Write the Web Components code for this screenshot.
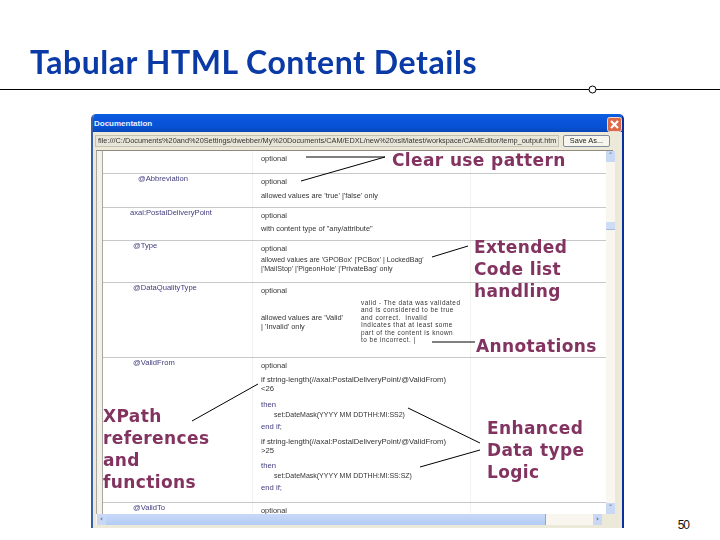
<!DOCTYPE html>
<html>
<head>
<meta charset="utf-8">
<title>Tabular HTML Content Details</title>
<style>
    html, body { margin: 0; padding: 0; background: #fff; }
</style>
</head>
<body>
<slide-page heading="Tabular HTML Content Details" number="50">
    <doc-window>
        <doc-row style="--h:23px">
            <span>optional</span>
        </doc-row>
        <doc-row style="--h:34px" name="@Abbreviation" indent="35">
            <span>optional</span>
            <span style="margin-top:5px">allowed values are 'true' |'false' only</span>
        </doc-row>
        <doc-row style="--h:33px" name="axal:PostalDeliveryPoint" indent="27">
            <span>optional</span>
            <span style="margin-top:4px">with content type of "any/attribute"</span>
        </doc-row>
        <doc-row style="--h:42px;--fs:7.1px" name="@Type" indent="30">
            <span style="font-size:7.4px">optional</span>
            <span style="margin-top:3px">allowed values are 'GPOBox' |'PCBox' | LockedBag'<br>|'MailStop' |'PigeonHole' |'PrivateBag' only</span>
        </doc-row>
        <doc-row style="--h:75px" name="@DataQualityType" indent="30">
            <span>optional</span>
            <span style="display:flex;align-items:flex-start;height:50px">
                <span style="width:100px;flex:none;margin-top:18px">allowed values are 'Valid'<br>| 'Invalid' only</span>
                <span style="line-height:7.4px;font-size:6.4px;letter-spacing:.5px;margin-top:4px;white-space:nowrap">valid - The data was validated<br>and is considered to be true<br>and correct.&nbsp; Invalid<br>Indicates that at least some<br>part of the content is known<br>to be incorrect. |</span>
            </span>
        </doc-row>
        <doc-row style="--h:145px;--fs:7.7px" name="@ValidFrom" indent="30">
            <span style="font-size:7.4px">optional</span>
            <span style="margin-top:5px">if string-length(//axal:PostalDeliveryPoint/@ValidFrom)<br>&lt;26</span>
            <span class="kw" style="margin-top:7px">then</span>
            <span class="in" style="margin-top:1px">set:DateMask(YYYY MM DDTHH:MI:SS2)</span>
            <span class="kw" style="margin-top:3px">end if;</span>
            <span style="margin-top:6px">if string-length(//axal:PostalDeliveryPoint/@ValidFrom)<br>&gt;25</span>
            <span class="kw" style="margin-top:6px">then</span>
            <span class="in" style="margin-top:1px">set:DateMask(YYYY MM DDTHH:MI:SS:SZ)</span>
            <span class="kw" style="margin-top:3px">end if;</span>
        </doc-row>
        <doc-row style="--h:12px" name="@ValidTo" indent="30">
            <span>optional</span>
        </doc-row>
    </doc-window>

    <call-out x="392" y="149">Clear use pattern</call-out>
    <call-out x="474" y="236">Extended<br>Code list<br>handling</call-out>
    <call-out x="476" y="335">Annotations</call-out>
    <call-out x="103" y="405">XPath<br>references<br>and<br>functions</call-out>
    <call-out x="487" y="417">Enhanced<br>Data type<br>Logic</call-out>
</slide-page>

<script>
class SlidePage extends HTMLElement {
    constructor() {
        super();
        const shadowRoot = this.attachShadow({ mode: 'open' });
        shadowRoot.innerHTML = `
            <style>
                :host {
                    display: block;
                    position: relative;
                    width: 720px;
                    height: 540px;
                    overflow: hidden;
                    background: #fff;
                }
                header {
                    height: 90px;
                    box-sizing: border-box;
                    padding: 40px 0 0 30px;
                    border-bottom: 1px solid #000;
                }
                h1 {
                    margin: 0;
                    font: bold 32px/44px Lato, "Liberation Sans", sans-serif;
                    letter-spacing: .55px;
                    color: #0a3aa6;
                    white-space: nowrap;
                    filter: blur(.2px);
                }
                main {
                    padding: 24px 0 0 91px;
                }
                svg {
                    position: absolute;
                    left: 0;
                    top: 0;
                    pointer-events: none;
                }
                .num {
                    position: absolute;
                    right: 31px;
                    bottom: 8px;
                    font: 12px "Liberation Sans", sans-serif;
                    letter-spacing: -1px;
                    color: #111;
                }
            </style>
            <header><h1></h1></header>
            <main><slot></slot></main>
            <svg width="720" height="540" viewBox="0 0 720 540" fill="none" stroke="#000" stroke-width="1">
                <circle cx="592.5" cy="89.5" r="3.5" fill="#fff"/>
                <path d="M306 157H385"/>
                <path d="M301 181L385 157"/>
                <path d="M432 257L468 246"/>
                <path d="M432 342H475"/>
                <path d="M192 421L258 384"/>
                <path d="M408 408L480 443"/>
                <path d="M420 467L480 450"/>
            </svg>
            <div class="num"></div>
        `;
        shadowRoot.querySelector('h1').textContent = this.getAttribute('heading');
        shadowRoot.querySelector('.num').textContent = this.getAttribute('number');
    }
}

class DocWindow extends HTMLElement {
    constructor() {
        super();
        const shadowRoot = this.attachShadow({ mode: 'open' });
        shadowRoot.innerHTML = `
            <style>
                :host {
                    display: flex;
                    flex-direction: column;
                    width: 533px;
                    height: 414px;
                    box-sizing: border-box;
                    border-style: solid;
                    border-color: #3a5ea8 #0a2f9e #3a5ea8 #3a5ea8;
                    border-width: 0 2px 0 2px;
                    border-radius: 5px 5px 0 0;
                    background: #ece9d8;
                    font-family: "Liberation Sans", sans-serif;
                    overflow: hidden;
                }
                .title {
                    height: 18px;
                    flex: none;
                    display: flex;
                    align-items: center;
                    justify-content: space-between;
                    padding: 1px 0 0 1px;
                    box-sizing: border-box;
                    background: linear-gradient(#0a5fe0, #0a55dc 30%, #0651d2 75%, #0a45b8);
                    color: #e8f0ff;
                    font: bold 8px "Liberation Sans", sans-serif;
                }
                .close { display: block; margin-top: 2px; }
                .address {
                    height: 18px;
                    flex: none;
                    display: flex;
                    align-items: center;
                    gap: 4px;
                    padding: 0 12px 0 2px;
                }
                .url {
                    flex: 1;
                    height: 12px;
                    box-sizing: border-box;
                    border: 1px solid #c4c1b2;
                    background: #e8e6d8;
                    font: 7.35px/10px "Liberation Sans", sans-serif;
                    color: #333;
                    padding-left: 2px;
                    white-space: nowrap;
                    overflow: hidden;
                    filter: blur(.3px);
                }
                .save {
                    width: 47px;
                    height: 12px;
                    flex: none;
                    box-sizing: border-box;
                    border: 1px solid #7f8b9c;
                    border-radius: 2px;
                    background: #f6f5ee;
                    text-align: center;
                    font: 7.4px/10px "Liberation Sans", sans-serif;
                    color: #222;
                    filter: blur(.2px);
                }
                .frame {
                    flex: 1;
                    display: flex;
                    flex-direction: column;
                    min-height: 0;
                    border-top: 1px solid #8d8b80;
                    margin: 0 9px 0 3px;
                }
                .view {
                    flex: 1;
                    display: flex;
                    min-height: 0;
                }
                .gutter {
                    width: 5px;
                    flex: none;
                    background: #f3f2ea;
                    border-right: 1px solid #a9a89f;
                    border-left: 1px solid #a9a89f;
                }
                .rows {
                    width: 503px;
                    flex: none;
                    background: #fff;
                    overflow: hidden;
                }
                .vscroll {
                    width: 9px;
                    flex: none;
                    display: flex;
                    flex-direction: column;
                    background: #f8f6ee;
                }
                .track { flex: 1; }
                .thumb {
                    height: 8px;
                    margin-top: 60px;
                    background: #cfdcf6;
                    border-bottom: 1px solid #a9bbdc;
                    box-sizing: border-box;
                }
                .arrow {
                    height: 11px;
                    flex: none;
                    background: #c9d8f5;
                    color: #4d6185;
                    font: bold 7px/11px "DejaVu Sans", sans-serif;
                    text-align: center;
                }
                .hscroll {
                    height: 11px;
                    flex: none;
                    display: flex;
                    background: #f8f6ee;
                    margin-right: 11px;
                    padding-left: 1px;
                }
                .hthumb {
                    width: 439px;
                    flex: none;
                    background: linear-gradient(#c8d9f8, #b3cbf4);
                    border-right: 1px solid #8ea7d0;
                }
                .hscroll .arrow { width: 9px; }
                .htrack { flex: 1; }
                .foot { height: 3px; flex: none; }
            </style>
            <div class="title">
                <span>Documentation</span>
                <svg class="close" width="15" height="15" viewBox="0 0 15 15">
                    <rect x=".5" y=".5" width="14" height="14" rx="2" fill="#dc6a48" stroke="#f3d8cc"/>
                    <path d="M4 4L11 11M11 4L4 11" stroke="#fff" stroke-width="2.2"/>
                </svg>
            </div>
            <div class="address">
                <div class="url">file:///C:/Documents%20and%20Settings/dwebber/My%20Documents/CAM/EDXL/new%20xslt/latest/workspace/CAMEditor/temp_output.htm</div>
                <div class="save">Save As...</div>
            </div>
            <div class="frame">
                <div class="view">
                    <div class="gutter"></div>
                    <div class="rows"><slot></slot></div>
                    <div class="vscroll">
                        <div class="arrow">&#710;</div>
                        <div class="track"><div class="thumb"></div></div>
                        <div class="arrow">&#711;</div>
                    </div>
                </div>
                <div class="hscroll">
                    <div class="arrow">&#8249;</div>
                    <div class="hthumb"></div>
                    <div class="htrack"></div>
                    <div class="arrow">&#8250;</div>
                </div>
                <div class="foot"></div>
            </div>
        `;
    }
}

class DocRow extends HTMLElement {
    constructor() {
        super();
        const shadowRoot = this.attachShadow({ mode: 'open' });
        shadowRoot.innerHTML = `
            <style>
                :host {
                    display: grid;
                    grid-template-columns: 149px 219px 1fr;
                    height: var(--h);
                    box-sizing: border-box;
                    border-bottom: 1px solid #c8c8c8;
                    font: var(--fs, 7.4px)/9px "Liberation Sans", sans-serif;
                    color: #333;
                    overflow: hidden;
                }
                :host(:last-child) { border-bottom: 0; }
                .name {
                    color: #3f3c7c;
                    font-size: 7.6px;
                    white-space: nowrap;
                    filter: blur(.35px);
                }
                .second {
                    border-left: 1px solid #f2f2ee;
                    border-right: 1px solid #f2f2ee;
                    padding: 3px 0 0 8px;
                    white-space: nowrap;
                    filter: blur(.35px);
                }
                ::slotted(span) { display: block; }
                ::slotted(.kw) { color: #3f3c7c; }
                ::slotted(.in) {
                    padding-left: 13px;
                    font-size: 7px;
                }
            </style>
            <div class="name"></div>
            <div class="second"><slot></slot></div>
            <div></div>
        `;
        const name = shadowRoot.querySelector('.name');
        name.textContent = this.getAttribute('name') || '';
        name.style.paddingLeft = (this.getAttribute('indent') || 0) + 'px';
    }
}

class CallOut extends HTMLElement {
    constructor() {
        super();
        const shadowRoot = this.attachShadow({ mode: 'open' });
        shadowRoot.innerHTML = `
            <style>
                :host {
                    position: absolute;
                    display: block;
                    font: bold 17px/22px "DejaVu Sans", Verdana, sans-serif;
                    letter-spacing: .38px;
                    color: #833360;
                    white-space: nowrap;
                    filter: blur(.2px);
                }
            </style>
            <slot></slot>
        `;
        this.style.left = this.getAttribute('x') + 'px';
        this.style.top = this.getAttribute('y') + 'px';
    }
}

customElements.define('slide-page', SlidePage);
customElements.define('doc-window', DocWindow);
customElements.define('doc-row', DocRow);
customElements.define('call-out', CallOut);
</script>
</body>
</html>
